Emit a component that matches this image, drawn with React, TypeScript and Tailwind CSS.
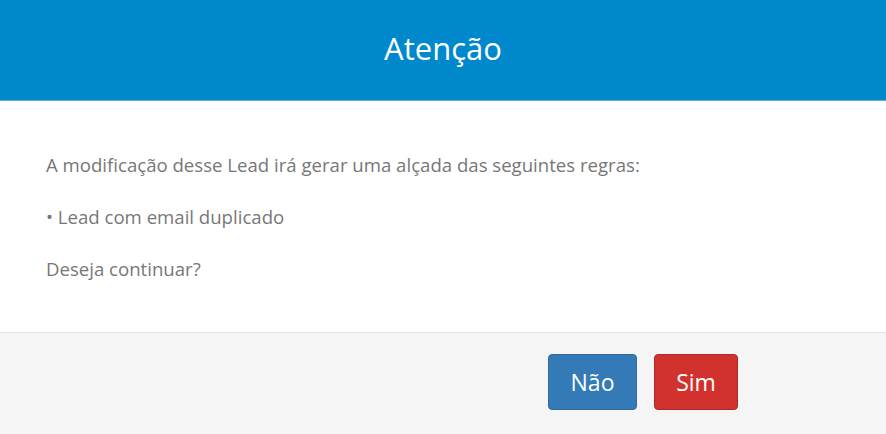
import React from 'react';

export default function App() {
  return (
    <div className="w-[886px] h-[434px] flex flex-col bg-white overflow-hidden" style={{ fontFamily: '"Open Sans", sans-serif' }}>
      {/* Header */}
      <div className="h-[101px] shrink-0 bg-[#0088cc] border-b border-[#5fb0e0] flex items-center justify-center">
        <h1 className="text-[31px] text-white leading-none pb-1">Atenção</h1>
      </div>

      {/* Body */}
      <div className="flex-1 px-[46px] pt-[51px] text-[18.6px] text-[#777777] flex flex-col gap-[27px] leading-[25px]">
        <p>A modificação desse Lead irá gerar uma alçada das seguintes regras:</p>
        <p>• Lead com email duplicado</p>
        <p>Deseja continuar?</p>
      </div>

      {/* Footer */}
      <div className="h-[102px] shrink-0 bg-[#f5f5f5] border-t border-[#e5e5e5] flex items-center justify-end pr-[148px] pb-[3px] gap-[17px]">
        <button className="w-[89px] h-[56px] rounded-[4px] bg-[#337ab7] border border-[#2e6da4] text-white text-[23px]">Não</button>
        <button className="w-[84px] h-[56px] rounded-[4px] bg-[#d2322d] border border-[#ac2925] text-white text-[23px]">Sim</button>
      </div>
    </div>
  );
}
